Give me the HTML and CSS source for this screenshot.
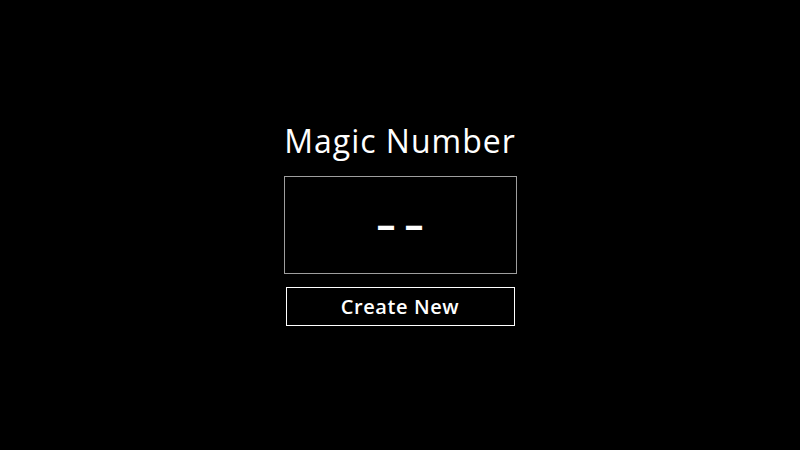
FILE: index.html
```html
<!DOCTYPE html>
<html lang="en">
<head>
<meta charset="utf-8">
<title>Magic Number</title>
<link rel="stylesheet" href="styles.css">
</head>
<body>
<main class="panel">
  <h1 class="title">Magic Number</h1>
  <div class="number-box"><span class="number">––</span></div>
  <button class="create-btn" type="button">Create New</button>
</main>
</body>
</html>
```
FILE: styles.css
```css
html, body {
  margin: 0;
  padding: 0;
  background: #000;
  height: 100%;
}
body {
  display: flex;
  justify-content: center;
  align-items: flex-start;
  font-family: "Open Sans", "Noto Sans", sans-serif;
  color: #fff;
}
.panel {
  display: flex;
  flex-direction: column;
  align-items: center;
  padding-top: 121px;
}
.title {
  margin: 0;
  font-size: 32px;
  font-weight: 400;
  line-height: 40px;
  letter-spacing: 1px;
  white-space: nowrap;
}
.number-box {
  box-sizing: border-box;
  width: 233px;
  height: 98px;
  margin-top: 15px;
  border: 1px solid #9e9e9e;
  display: flex;
  align-items: center;
  justify-content: center;
}
.number {
  font-size: 38px;
  font-weight: 700;
  line-height: 1;
  letter-spacing: 9px;
  margin-right: -9px;
  padding-bottom: 4px;
}
.create-btn {
  box-sizing: border-box;
  width: 229px;
  height: 39px;
  margin-top: 13px;
  border: 1px solid #fff;
  background: #000;
  color: #fff;
  font-family: "Open Sans", "Noto Sans", sans-serif;
  font-size: 20px;
  font-weight: 600;
  letter-spacing: 0.6px;
  padding: 0;
  cursor: pointer;
}
```
